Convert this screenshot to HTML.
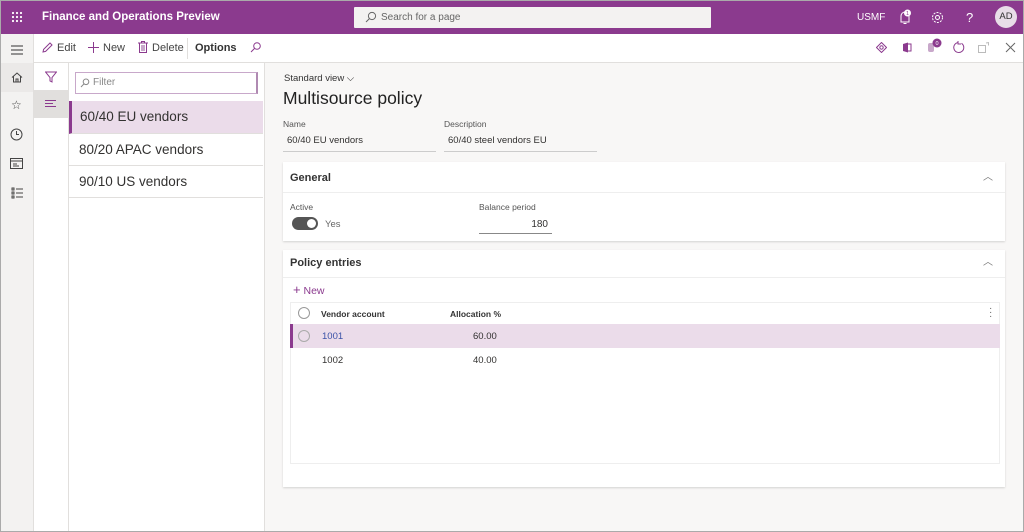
<!DOCTYPE html>
<html><head><meta charset="utf-8"><style>
*{box-sizing:border-box;margin:0;padding:0}
body{width:1024px;height:532px;overflow:hidden;font-family:"Liberation Sans",sans-serif;background:#f8f7f6;position:relative;color:#323130}
.abs{position:absolute}
.top{left:0;top:0;width:1024px;height:34px;background:#8b3a8e;color:#fff}
.tb{left:34px;top:34px;width:990px;height:29px;background:#fff;border-bottom:1px solid #e1dfdd;font-size:11px}
.nav{left:0;top:34px;width:34px;height:498px;background:#f3f2f1;border-right:1px solid #e1dfdd}
.fcol{left:34px;top:63px;width:35px;height:469px;background:#fff;border-right:1px solid #e1dfdd}
.list{left:69px;top:63px;width:196px;height:469px;background:#fff;border-right:1px solid #e1dfdd}
.item{position:absolute;left:0;width:194px;height:32px;font-size:13.5px;line-height:32px;padding-left:10px;border-bottom:1px solid #e1dfdd;color:#323130}
.card{background:#fff;box-shadow:0 1px 2px rgba(0,0,0,.15)}
.lbl{font-size:8.5px;color:#555}
.val{font-size:9.5px}
svg{display:block}
</style></head><body>
<div class="abs top">
 <svg class="abs" style="left:11px;top:11px" width="12" height="12"><g fill="#fff"><circle cx="2" cy="2" r="1.1"/><circle cx="6" cy="2" r="1.1"/><circle cx="10" cy="2" r="1.1"/><circle cx="2" cy="6" r="1.1"/><circle cx="6" cy="6" r="1.1"/><circle cx="10" cy="6" r="1.1"/><circle cx="2" cy="10" r="1.1"/><circle cx="6" cy="10" r="1.1"/><circle cx="10" cy="10" r="1.1"/></g></svg>
 <div class="abs" style="left:42px;top:11px;font-size:11.5px;font-weight:bold">Finance and Operations Preview</div>
 <div class="abs" style="left:354px;top:7px;width:357px;height:21px;background:#f3f2f1;border-radius:1px;color:#666;font-size:10px;line-height:21px;padding-left:27px">Search for a page</div>
 <svg class="abs" style="left:365px;top:11px" width="12" height="12"><circle cx="7" cy="5" r="3.6" fill="none" stroke="#666" stroke-width="1"/><path d="M4.4 7.6L1 11" stroke="#666"/></svg>
 <div class="abs" style="left:857px;top:12px;font-size:10px">USMF</div>
 <svg class="abs" style="left:897px;top:9px" width="16" height="16"><path d="M4 13V7a4 4 0 0 1 8 0v6zM6.5 14.5h3" fill="none" stroke="#fff"/><circle cx="10.5" cy="4" r="3.5" fill="#fff"/><text x="10.5" y="6" font-size="5.5" fill="#8b3a8e" text-anchor="middle">1</text></svg>
 <svg class="abs" style="left:931px;top:11px" width="13" height="13"><circle cx="6.5" cy="6.5" r="2" fill="none" stroke="#fff"/><circle cx="6.5" cy="6.5" r="5" fill="none" stroke="#fff" stroke-dasharray="2 1.2"/></svg>
 <div class="abs" style="left:966px;top:10px;font-size:13px">?</div>
 <div class="abs" style="left:995px;top:6px;width:22px;height:22px;border-radius:50%;background:#e8dde8;color:#333;font-size:9.5px;line-height:22px;text-align:center">AD</div>
</div>
<div class="abs nav">
 <svg class="abs" style="left:11px;top:11px" width="12" height="10"><path d="M0 1h12M0 5h12M0 9h12" stroke="#333"/></svg>
 <div class="abs" style="left:0;top:29px;width:33px;height:29px;background:#ebe9e8"></div>
 <svg class="abs" style="left:11px;top:38px" width="12" height="11"><path d="M1 5.5L6 1l5 4.5M2.5 4.5V10h7V4.5M5 10V7h2v3" fill="none" stroke="#444"/></svg>
 <div class="abs" style="left:11px;top:64px;font-size:12px;color:#444">☆</div>
 <svg class="abs" style="left:10px;top:94px" width="13" height="13"><circle cx="6.5" cy="6.5" r="5.5" fill="none" stroke="#444"/><path d="M6.5 3v3.5h2.5" fill="none" stroke="#444"/></svg>
 <svg class="abs" style="left:10px;top:124px" width="13" height="11"><rect x=".5" y=".5" width="12" height="10" fill="none" stroke="#444"/><path d="M.5 3h12M3 6h4M3 8h6" stroke="#444"/></svg>
 <svg class="abs" style="left:11px;top:153px" width="12" height="12"><path d="M1 1h2v2H1zM1 5h2v2H1zM1 9h2v2H1zM5 2h7M5 6h7M5 10h7" fill="none" stroke="#444"/></svg>
</div>
<div class="abs tb">
 <svg class="abs" style="left:8px;top:8px" width="11" height="11"><path d="M1 10l.6-2.6L8 1l2 2-6.4 6.4z" fill="none" stroke="#8b3a8e"/></svg>
 <div class="abs" style="left:23px;top:8px;color:#444">Edit</div>
 <svg class="abs" style="left:54px;top:8px" width="11" height="11"><path d="M5.5 0v11M0 5.5h11" stroke="#8b3a8e"/></svg>
 <div class="abs" style="left:69px;top:8px;color:#444">New</div>
 <svg class="abs" style="left:104px;top:7px" width="10" height="12"><path d="M0 2h10M3.5 2V.5h3V2M1.5 2v9.5h7V2" fill="none" stroke="#8b3a8e"/><rect x="3" y="4" width="4" height="6" fill="#c8a8ca"/></svg>
 <div class="abs" style="left:118px;top:8px;color:#444">Delete</div>
 <div class="abs" style="left:153px;top:4px;width:1px;height:21px;background:#e1dfdd"></div>
 <div class="abs" style="left:161px;top:8px;font-weight:bold;color:#333">Options</div>
 <svg class="abs" style="left:216px;top:8px" width="11" height="11"><circle cx="7" cy="4" r="3.3" fill="none" stroke="#8b3a8e"/><path d="M4.6 6.4L1 10" stroke="#8b3a8e"/></svg>
 <svg class="abs" style="left:842px;top:8px" width="11" height="11"><path d="M5.5.5l5 5-5 5-5-5z" fill="none" stroke="#8b3a8e"/><circle cx="5.5" cy="5.5" r="1.7" fill="none" stroke="#8b3a8e"/></svg>
 <svg class="abs" style="left:868px;top:8px" width="10" height="11"><path d="M1 2l5-1.5v10L1 9z" fill="#8b3a8e"/><path d="M6 2h3v7H6" fill="none" stroke="#8b3a8e"/></svg>
 <svg class="abs" style="left:893px;top:4px" width="16" height="16"><rect x="1" y="5" width="6" height="9" rx="2" fill="#c8a8ca"/><circle cx="10" cy="5" r="4.5" fill="#8b3a8e"/><text x="10" y="7" font-size="5.5" fill="#fff" text-anchor="middle">0</text></svg>
 <svg class="abs" style="left:918px;top:7px" width="13" height="13"><path d="M9.5 2.3A5 5 0 1 1 6.5 1.5" fill="none" stroke="#8b3a8e"/><path d="M6 0v3h3" fill="none" stroke="#8b3a8e"/></svg>
 <svg class="abs" style="left:944px;top:8px" width="12" height="11"><path d="M.5 3.5h7v7h-7zM8 1l3-.5M10.5.5v3" fill="none" stroke="#bbb"/></svg>
 <svg class="abs" style="left:971px;top:8px" width="11" height="11"><path d="M1 1l9 9M10 1l-9 9" stroke="#666"/></svg>
</div>
<div class="abs fcol">
 <svg class="abs" style="left:11px;top:8px" width="12" height="12"><path d="M.5 1h11L7 6.5V11L5 10V6.5z" fill="none" stroke="#8b3a8e"/></svg>
 <div class="abs" style="left:0;top:27px;width:34px;height:28px;background:#e1dfdd"></div>
 <svg class="abs" style="left:11px;top:37px" width="12" height="8"><path d="M0 .5h11M0 3.5h8M0 6.5h11" stroke="#8b3a8e"/></svg>
</div>
<div class="abs list">
 <div class="abs" style="left:6px;top:9px;width:183px;height:22px;border:1px solid #c8a8ca;border-right:2px solid #b08ab2;font-size:10px;color:#888;line-height:20px;padding-left:17px">Filter</div>
 <svg class="abs" style="left:11px;top:15px" width="10" height="10"><circle cx="6" cy="3.8" r="2.8" fill="none" stroke="#888"/><path d="M4 5.8L1 9" stroke="#888"/></svg>
 <div class="item" style="top:38px;background:#ebdcea;border-left:3px solid #8b3a8e;padding-left:8px;height:33px">60/40 EU vendors</div>
 <div class="item" style="top:71px">80/20 APAC vendors</div>
 <div class="item" style="top:103px">90/10 US vendors</div>
</div>
<div class="abs" style="left:284px;top:73px;font-size:9.5px;color:#333">Standard view ⌵</div>
<div class="abs" style="left:283px;top:88px;font-size:17.5px;color:#222">Multisource policy</div>
<div class="abs lbl" style="left:283px;top:119px">Name</div>
<div class="abs val" style="left:283px;top:131px;width:153px;height:21px;border-bottom:1px solid #ccc;padding:4px 4px">60/40 EU vendors</div>
<div class="abs lbl" style="left:444px;top:119px">Description</div>
<div class="abs val" style="left:444px;top:131px;width:153px;height:21px;border-bottom:1px solid #ccc;padding:4px 4px">60/40 steel vendors EU</div>

<div class="abs card" style="left:283px;top:162px;width:722px;height:79px">
 <div class="abs" style="left:7px;top:10px;font-size:11px;font-weight:bold;color:#333">General</div>
 <div class="abs" style="left:700px;top:6px;font-size:10px;color:#777">︿</div>
 <div class="abs" style="left:0;top:30px;width:722px;height:1px;background:#eee"></div>
 <div class="abs lbl" style="left:7px;top:40px">Active</div>
 <div class="abs" style="left:9px;top:55px;width:26px;height:13px;border-radius:7px;background:#555"></div>
 <div class="abs" style="left:24px;top:57px;width:9px;height:9px;border-radius:50%;background:#fff"></div>
 <div class="abs val" style="left:42px;top:57px;color:#666">Yes</div>
 <div class="abs lbl" style="left:196px;top:40px">Balance period</div>
 <div class="abs val" style="left:196px;top:52px;width:73px;height:20px;border-bottom:1px solid #888;text-align:right;padding:5px 4px;font-size:10px">180</div>
</div>

<div class="abs card" style="left:283px;top:250px;width:722px;height:237px">
 <div class="abs" style="left:7px;top:7px;font-size:11px;font-weight:bold;color:#333">Policy entries</div>
 <div class="abs" style="left:700px;top:3px;font-size:10px;color:#777">︿</div>
 <div class="abs" style="left:0;top:27px;width:722px;height:1px;background:#eee"></div>
 <div class="abs" style="left:10px;top:32px;font-size:10.5px;color:#8b3a8e"><span style="font-size:13px">+</span> New</div>
 <div class="abs" style="left:7px;top:52px;width:710px;height:162px;border:1px solid #eee;border-top:none"></div>
 <div class="abs" style="left:7px;top:52px;width:710px;height:1px;background:#eee"></div>
 <div class="abs" style="left:15px;top:57px;width:12px;height:12px;border:1px solid #999;border-radius:50%"></div>
 <div class="abs" style="left:38px;top:59px;font-size:8.5px;font-weight:bold;color:#333">Vendor account</div>
 <div class="abs" style="left:167px;top:59px;font-size:8.5px;font-weight:bold;color:#333">Allocation %</div>
 <div class="abs" style="left:706px;top:57px;font-size:10px;color:#666;line-height:4px">·<br>·<br>·</div>
 <div class="abs" style="left:7px;top:74px;width:710px;height:24px;background:#ebdcea;border-left:3px solid #8b3a8e"></div>
 <div class="abs" style="left:15px;top:80px;width:12px;height:12px;border:1px solid #aaa;border-radius:50%"></div>
 <div class="abs val" style="left:39px;top:81px;color:#3b52a8">1001</div>
 <div class="abs val" style="left:190px;top:81px">60.00</div>
 <div class="abs val" style="left:39px;top:105px">1002</div>
 <div class="abs val" style="left:190px;top:105px">40.00</div>
</div>
<div class="abs" style="left:0;top:0;width:1024px;height:532px;border:1px solid #aaa;pointer-events:none"></div>
</body></html>
